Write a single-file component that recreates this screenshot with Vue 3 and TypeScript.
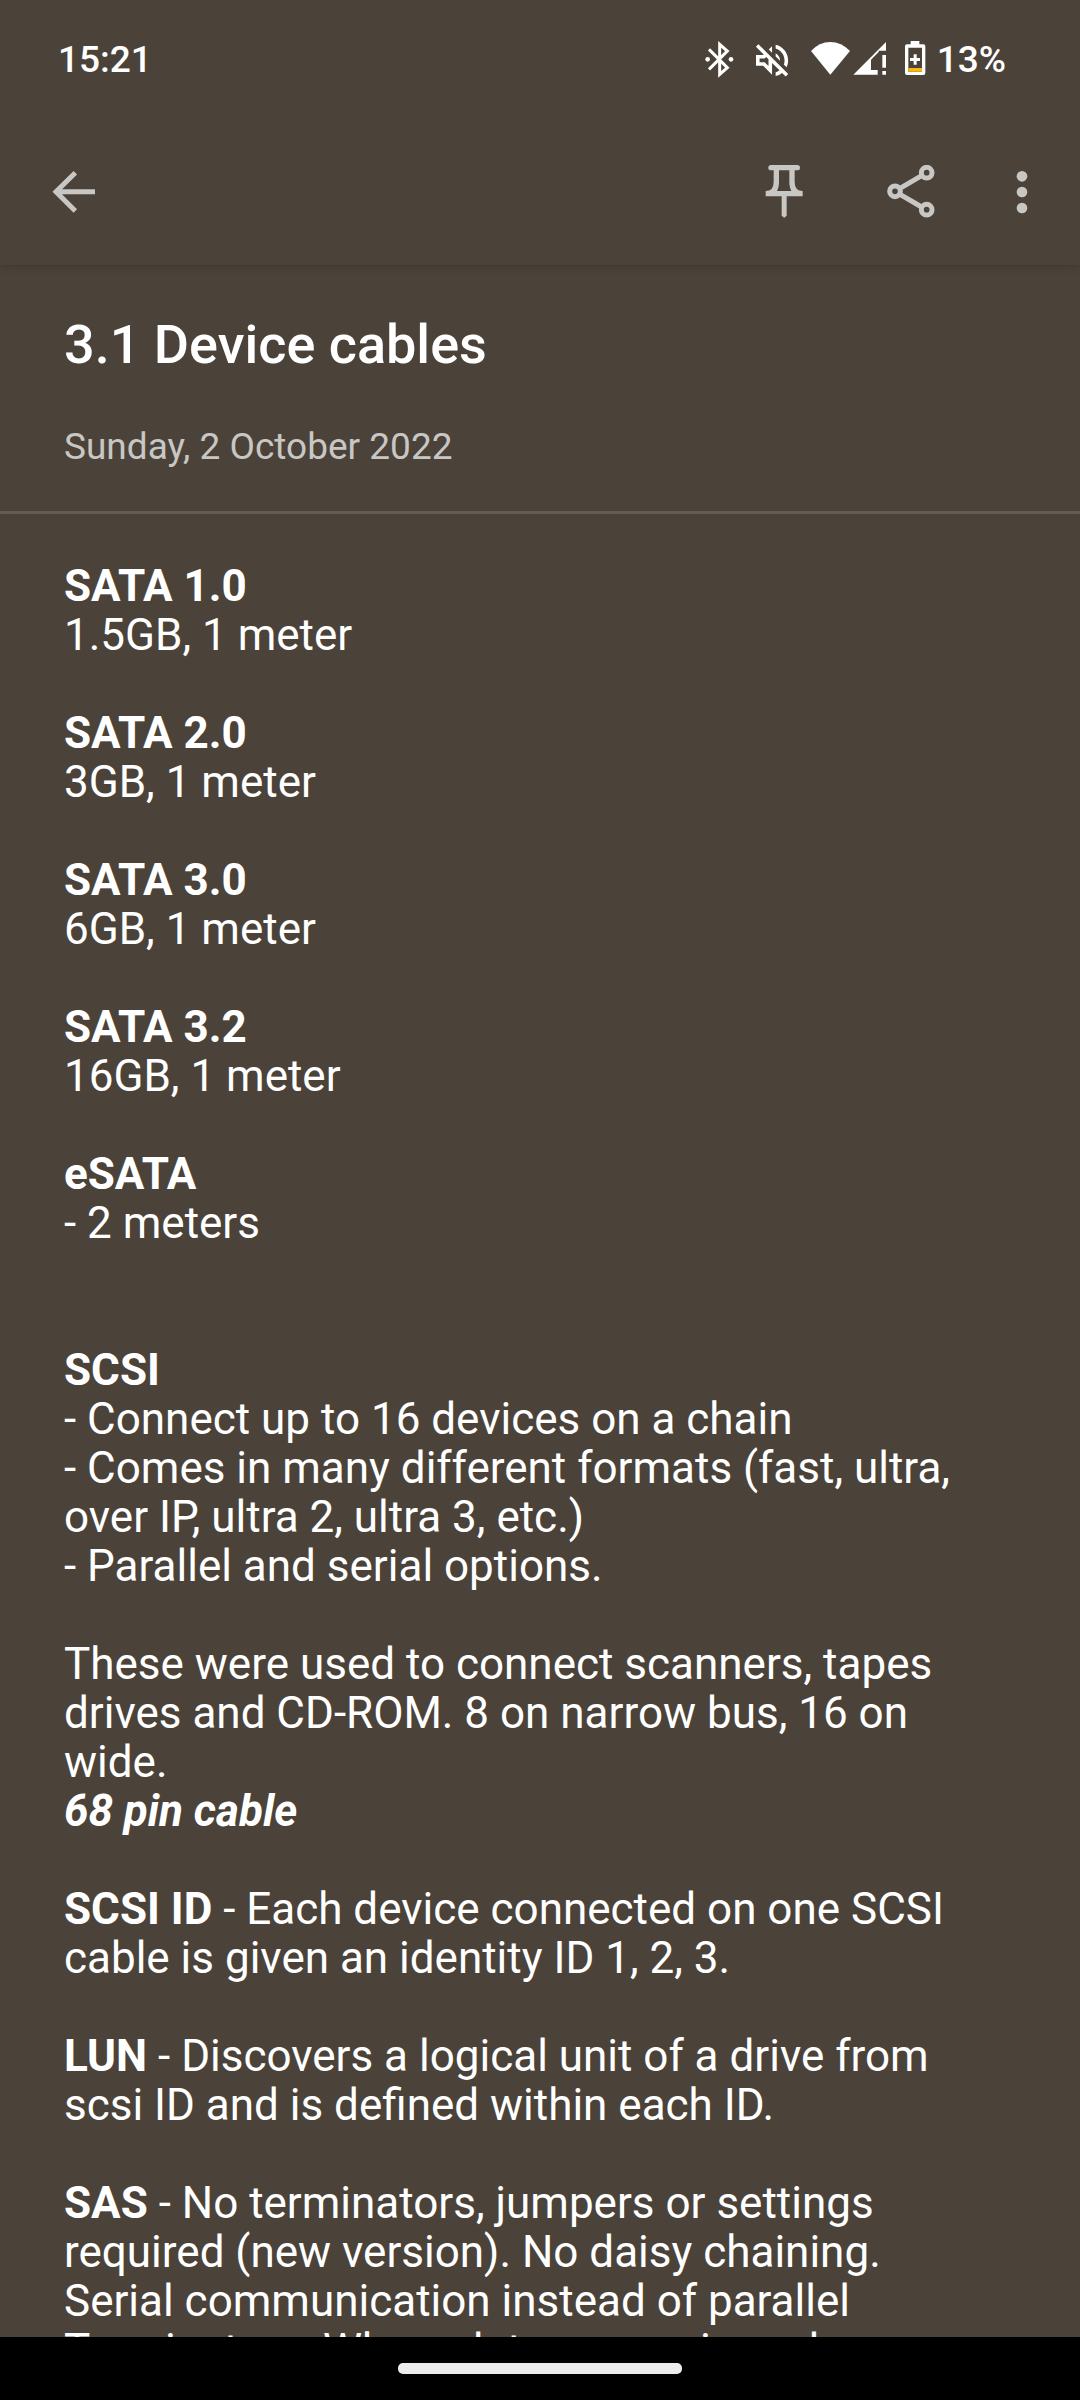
<script setup lang="ts">
interface Line {
  text?: string
  term?: string
  emphasis?: string
}

interface Block {
  lines: Line[]
  sectionEnd?: boolean
}

const title = '3.1 Device cables'
const date = 'Sunday, 2 October 2022'

const blocks: Block[] = [
  { lines: [{ term: 'SATA 1.0' }, { text: '1.5GB, 1 meter' }] },
  { lines: [{ term: 'SATA 2.0' }, { text: '3GB, 1 meter' }] },
  { lines: [{ term: 'SATA 3.0' }, { text: '6GB, 1 meter' }] },
  { lines: [{ term: 'SATA 3.2' }, { text: '16GB, 1 meter' }] },
  { lines: [{ term: 'eSATA' }, { text: '- 2 meters' }], sectionEnd: true },
  {
    lines: [
      { term: 'SCSI' },
      { text: '- Connect up to 16 devices on a chain' },
      { text: '- Comes in many different formats (fast, ultra,' },
      { text: 'over IP, ultra 2, ultra 3, etc.)' },
      { text: '- Parallel and serial options.' },
    ],
  },
  {
    lines: [
      { text: 'These were used to connect scanners, tapes' },
      { text: 'drives and CD-ROM. 8 on narrow bus, 16 on' },
      { text: 'wide.' },
      { emphasis: '68 pin cable' },
    ],
  },
  {
    lines: [
      { term: 'SCSI ID', text: ' - Each device connected on one SCSI' },
      { text: 'cable is given an identity ID 1, 2, 3.' },
    ],
  },
  {
    lines: [
      { term: 'LUN', text: ' - Discovers a logical unit of a drive from' },
      { text: 'scsi ID and is defined within each ID.' },
    ],
  },
  {
    lines: [
      { term: 'SAS', text: ' - No terminators, jumpers or settings' },
      { text: 'required (new version). No daisy chaining.' },
      { text: 'Serial communication instead of parallel' },
      { text: 'Terminators. Where data comes in and' },
    ],
  },
]
</script>

<template>
  <div class="screen">
    <div class="status">
      <time class="clock">15:21</time>
      <div class="indicators">
        <svg width="30" height="38" viewBox="72 60 90 114" role="img" aria-label="Bluetooth connected">
          <path d="M84 88L139 143L116 163V73L139 93L84 148" fill="none" stroke="#fff" stroke-width="9" />
          <circle cx="80" cy="118" r="7" fill="#fff" />
          <circle cx="150" cy="118" r="7" fill="#fff" />
        </svg>
        <svg class="sound" width="35" height="38" viewBox="222 60 105 114" role="img" aria-label="Muted">
          <path
            transform="translate(209 57) scale(5.35)"
            fill="#fff"
            d="M4.34 2.93L2.93 4.34 7.29 8.7 7 9H3v6h4l5 5v-6.59l4.18 4.18c-.65.49-1.38.88-2.18 1.11v2.06c1.34-.3 2.57-.92 3.61-1.75l2.05 2.05 1.41-1.41L4.34 2.93zM10 15.17L7.83 13H5v-2h2.83l.88-.88L10 11.41v3.76zM19 12c0 .82-.15 1.61-.41 2.34l1.53 1.53c.56-1.17.88-2.48.88-3.87 0-4.28-2.99-7.86-7-8.77v2.06c2.89.86 5 3.54 5 6.71zm-7-8l-1.88 1.88L12 7.76V4zm4.5 8c0-1.77-1.02-3.29-2.5-4.03v1.79l2.48 2.48c.01-.08.02-.16.02-.24z"
          />
        </svg>
        <svg class="network" width="77" height="38" viewBox="390 60 231 114" role="img" aria-label="Wi-Fi and mobile signal">
          <path d="M393 93Q418 66 451 66T510 93L451 164Z" fill="#fff" />
          <path d="M520 164L618 66V92H596V96L573 119V150H593V164Z" fill="#fff" />
          <path d="M607 105H618V143H607ZM607 153H618V164H607Z" fill="#fff" />
        </svg>
        <svg class="battery" width="22" height="38" viewBox="672 60 66 114" role="img" aria-label="Battery">
          <path
            fill="#fff"
            fill-rule="evenodd"
            d="M692 63H718V73H730Q736 73 736 79V159Q736 165 730 165H681Q675 165 675 159V79Q675 73 681 73H692ZM685 83V155H726V83Z"
          />
          <path d="M701 103H710V114H720V123H710V134H701V123H690V114H701Z" fill="#fff" />
          <path d="M685 144H726V155H685Z" fill="#fbb90f" />
        </svg>
        <span class="charge">13%</span>
      </div>
    </div>

    <header class="appbar">
      <button class="icon-btn" type="button" aria-label="Back">
        <svg width="54" height="54" viewBox="141 494 162 162">
          <path d="M226 517L168 574.500L226 632M168 574.500H285" fill="none" stroke="currentColor" stroke-width="15" />
        </svg>
      </button>
      <div class="actions">
        <button class="icon-btn wide" type="button" aria-label="Pin">
          <svg width="54" height="54" viewBox="112 103 162 162">
            <g fill="none" stroke="currentColor" stroke-width="16">
              <path d="M154 111H233" stroke-linecap="round" />
              <path d="M170 111V154Q170 189 138 189H249Q217 189 217 154V111" />
            </g>
            <path d="M186 190H201V255L193.500 261L186 255Z" fill="currentColor" />
          </svg>
        </button>
        <button class="icon-btn wide" type="button" aria-label="Share">
          <svg width="54" height="54" viewBox="494 103 162 162">
            <g fill="none" stroke="currentColor" stroke-width="15">
              <circle cx="527" cy="182" r="16" />
              <circle cx="622" cy="126" r="16" />
              <circle cx="622" cy="237" r="16" />
              <path d="M542 173L607 135M542 191L607 229" />
            </g>
          </svg>
        </button>
        <button class="icon-btn narrow" type="button" aria-label="More options">
          <svg width="54" height="54" viewBox="826 103 162 162" fill="currentColor">
            <circle cx="907" cy="137" r="16" />
            <circle cx="907" cy="184" r="16" />
            <circle cx="907" cy="232" r="16" />
          </svg>
        </button>
      </div>
    </header>

    <main class="note">
      <div class="heading">
        <h1>{{ title }}</h1>
        <time class="date" datetime="2022-10-02">{{ date }}</time>
      </div>
      <div class="body">
        <p v-for="(block, i) in blocks" :key="i" :class="{ 'section-end': block.sectionEnd }">
          <span v-for="(line, j) in block.lines" :key="j" class="line"
            ><strong v-if="line.term">{{ line.term }}</strong
            ><em v-if="line.emphasis">{{ line.emphasis }}</em
            ><template v-if="line.text">{{ line.text }}</template></span
          >
        </p>
      </div>
    </main>

    <footer class="gesture-bar"><span class="pill"></span></footer>
  </div>
</template>

<style>
body {
  margin: 0;
  background: #000;
}
</style>

<style scoped>
.screen {
  display: flex;
  flex-direction: column;
  height: 100vh;
  background: #4b433a;
  color: #fff;
  font-family: Roboto, sans-serif;
}

.status {
  flex: none;
  display: flex;
  align-items: center;
  justify-content: space-between;
  height: 118px;
  padding: 0 74px 0 58px;
  font-size: 37px;
  font-weight: 500;
}

.indicators {
  display: flex;
  align-items: center;
}

.sound,
.network {
  margin-left: 20px;
}

.battery {
  margin-left: 17px;
}

.charge {
  margin-left: 11px;
}

.appbar {
  flex: none;
  display: flex;
  align-items: center;
  justify-content: space-between;
  height: 147px;
  padding: 0 30px 0 38px;
  box-shadow: 0 2px 8px rgba(0, 0, 0, 0.14);
  clip-path: inset(0 0 -12px 0);
}

.actions {
  display: flex;
  gap: 39px;
}

.icon-btn {
  display: flex;
  align-items: center;
  justify-content: center;
  width: 72px;
  height: 88px;
  padding: 0;
  border: 0;
  background: none;
  color: #c9c7c4;
}

.icon-btn svg {
  flex: none;
}

.icon-btn.wide {
  width: 88px;
}

.icon-btn.narrow {
  width: 56px;
}

.note {
  flex: 1;
  min-height: 0;
  overflow: hidden;
}

.heading {
  padding: 48px 64px 41px;
  border-bottom: 3px solid #645b51;
}

h1 {
  margin: 0 0 47px;
  font-size: 54px;
  font-weight: 500;
  line-height: 64px;
}

.date {
  display: block;
  font-size: 37px;
  line-height: 46px;
  color: #c9c7c4;
}

.body {
  padding: 48px 64px 0;
  font-size: 44px;
  line-height: 49px;
}

.body p {
  margin: 0 0 49px;
}

.body p.section-end {
  margin-bottom: 98px;
}

.line {
  display: block;
  white-space: pre-wrap;
}

.line strong,
.line em {
  font-weight: 700;
}

.gesture-bar {
  flex: none;
  display: flex;
  justify-content: center;
  padding: 26px 0;
  background: #000;
}

.pill {
  width: 284px;
  height: 11px;
  border-radius: 5px;
  background: #ececec;
}
</style>
